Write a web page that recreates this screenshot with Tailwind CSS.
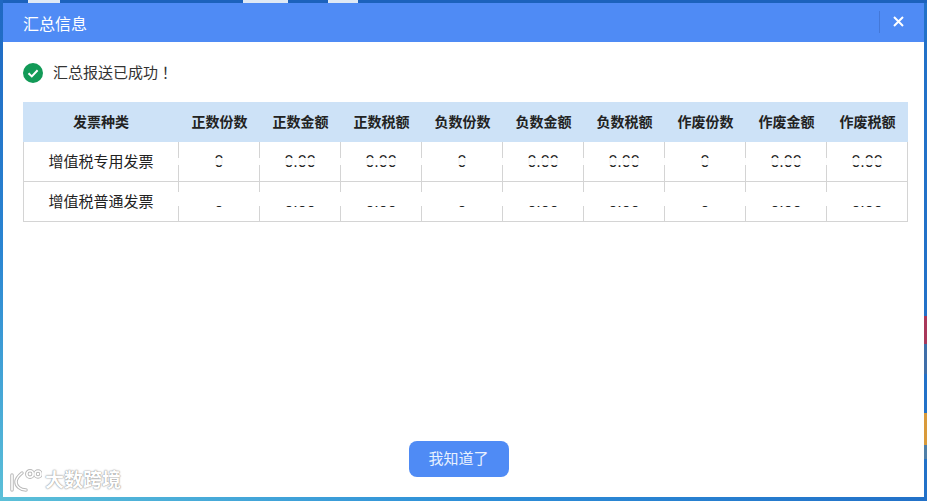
<!DOCTYPE html>
<html lang="en">
<head>
  <meta charset="UTF-8" />
  <title>汇总信息</title>
  <script src="https://cdn.jsdelivr.net/npm/@tailwindcss/browser@4"></script>
</head>
<body class="relative w-[927px] h-[501px] overflow-hidden bg-[#2271c8] font-['Liberation_Sans','Noto_Sans_CJK_SC',sans-serif]">
  <!-- Desktop peeking out round the dialog -->
  <div class="absolute left-0 top-0 w-full h-[3px] bg-[#1c62bc]"></div>
  <div class="absolute left-0 top-0 w-[3px] h-full bg-gradient-to-b from-[#1f68c2] via-[#2a85d2] to-[#5cc0d8]"></div>
  <div class="absolute left-0 bottom-0 w-full h-[4px] bg-gradient-to-r from-[#5cc0d8] via-[#2e8fd8] to-[#2271c8]"></div>
  <div class="absolute left-[28px] top-0 w-[32px] h-[3px] bg-[#dfe9f5]"></div>
  <div class="absolute left-[243px] top-0 w-[45px] h-[3px] bg-[#dfe9f5]"></div>
  <div class="absolute left-[328px] top-0 w-[30px] h-[3px] bg-[#dfe9f5]"></div>
  <div class="absolute left-[924px] top-[316px] w-[3px] h-[28px] bg-[#a8385a]"></div>
  <div class="absolute left-[924px] top-[344px] w-[3px] h-[30px] bg-[#3f6ea8]"></div>
  <div class="absolute left-[924px] top-[413px] w-[3px] h-[32px] bg-[#d99a3a]"></div>
  <div class="absolute left-[924px] top-[445px] w-[3px] h-[14px] bg-[#4f7fa8]"></div>

  <div class="relative mx-[3px] mt-[3px] w-[921px] h-[494px] bg-white flex flex-col">
    <!-- Header -->
    <header class="h-[39px] shrink-0 bg-[#4f8bf5] flex items-center justify-between pl-5 text-white">
      <h1 class="text-[16px] font-normal mt-[5px]">汇总信息</h1>
      <div class="h-[22px] w-[45px] mb-[2px] border-l border-[#4478d8] flex items-center">
        <svg class="ml-[13px]" width="11" height="11" viewBox="0 0 11 11" fill="none" stroke="#ffffff" stroke-width="2"><path d="M1 1 10 10M10 1 1 10" /></svg>
      </div>
    </header>

    <div class="flex-1 px-5 flex flex-col">
      <!-- Success message -->
      <div class="mt-[21px] h-5 flex items-center gap-[10px] text-[15px] text-[#333333]">
        <svg width="20" height="20" viewBox="0 0 20 20"><circle cx="10" cy="10" r="10" fill="#129a57" /><path d="M5.5 10.2 8.8 13.4 14.6 7.3" fill="none" stroke="#ffffff" stroke-width="2" /></svg>
        <span>汇总报送已成功<span class="font-['Noto_Sans_CJK_JP']">！</span></span>
      </div>

      <!-- Table -->
      <div class="mt-[19px] w-[885px] text-[14px] text-[#222222]">
        <div class="grid grid-cols-[156px_repeat(8,81px)_81px] h-10 bg-[#cde2f7] font-bold text-center items-center">
          <div>发票种类</div><div>正数份数</div><div>正数金额</div><div>正数税额</div><div>负数份数</div><div>负数金额</div><div>负数税额</div><div>作废份数</div><div>作废金额</div><div>作废税额</div>
        </div>
        <div class="relative grid grid-cols-[154px_repeat(8,81px)_81px] h-10 border-x border-b border-[#d4d4d4] text-center items-center">
          <div class="text-[15px]">增值税专用发票</div>
          <div class="h-full text-[16px] leading-10 border-l border-[#d4d4d4]">0</div><div class="h-full text-[16px] leading-10 border-l border-[#d4d4d4]">0.00</div><div class="h-full text-[16px] leading-10 border-l border-[#d4d4d4]">0.00</div>
          <div class="h-full text-[16px] leading-10 border-l border-[#d4d4d4]">0</div><div class="h-full text-[16px] leading-10 border-l border-[#d4d4d4]">0.00</div><div class="h-full text-[16px] leading-10 border-l border-[#d4d4d4]">0.00</div>
          <div class="h-full text-[16px] leading-10 border-l border-[#d4d4d4]">0</div><div class="h-full text-[16px] leading-10 border-l border-[#d4d4d4]">0.00</div><div class="h-full text-[16px] leading-10 border-l border-[#d4d4d4]">0.00</div>
          <!-- numbers are smudged out in the picture -->
          <div class="absolute left-[154px] right-0 top-[16px] h-[7px] bg-white/95"></div>
        </div>
        <div class="relative grid grid-cols-[154px_repeat(8,81px)_81px] h-10 border-x border-b border-[#d4d4d4] text-center items-center">
          <div class="text-[15px]">增值税普通发票</div>
          <div class="h-full text-[16px] leading-10 border-l border-[#d4d4d4]">0</div><div class="h-full text-[16px] leading-10 border-l border-[#d4d4d4]">0.00</div><div class="h-full text-[16px] leading-10 border-l border-[#d4d4d4]">0.00</div>
          <div class="h-full text-[16px] leading-10 border-l border-[#d4d4d4]">0</div><div class="h-full text-[16px] leading-10 border-l border-[#d4d4d4]">0.00</div><div class="h-full text-[16px] leading-10 border-l border-[#d4d4d4]">0.00</div>
          <div class="h-full text-[16px] leading-10 border-l border-[#d4d4d4]">0</div><div class="h-full text-[16px] leading-10 border-l border-[#d4d4d4]">0.00</div><div class="h-full text-[16px] leading-10 border-l border-[#d4d4d4]">0.00</div>
          <div class="absolute left-[154px] right-0 top-[10px] h-[14px] bg-white"></div>
        </div>
      </div>

      <!-- Button -->
      <div class="mt-auto mb-[20px] pr-[10px] flex justify-center">
        <button class="w-[100px] h-9 rounded-lg bg-[#4f8bf5] text-[#e8f1ff] text-[15px]">我知道了</button>
      </div>
    </div>

    <!-- Watermark -->
    <div class="absolute left-[5px] bottom-[2px] flex items-center gap-[3px] text-[19px] font-bold text-white [text-shadow:0_0_1px_#8a8a8a,0_0_2px_#9a9a9a]">
      <svg width="34" height="24" viewBox="0 0 34 24" fill="none" stroke-linecap="round">
        <g stroke="#b8b8b8" stroke-width="3.5"><path d="M4 6V21M14 4C9 8 8 11 8 13C8 17 12 21 18 21" /><circle cx="22" cy="5" r="3.2" /><circle cx="30" cy="5" r="3" /></g>
        <g stroke="#ffffff" stroke-width="1.6"><path d="M4 6V21M14 4C9 8 8 11 8 13C8 17 12 21 18 21" /><circle cx="22" cy="5" r="3.2" /><circle cx="30" cy="5" r="3" /></g>
      </svg>
      <span>大数跨境</span>
    </div>
  </div>
</body>
</html>
